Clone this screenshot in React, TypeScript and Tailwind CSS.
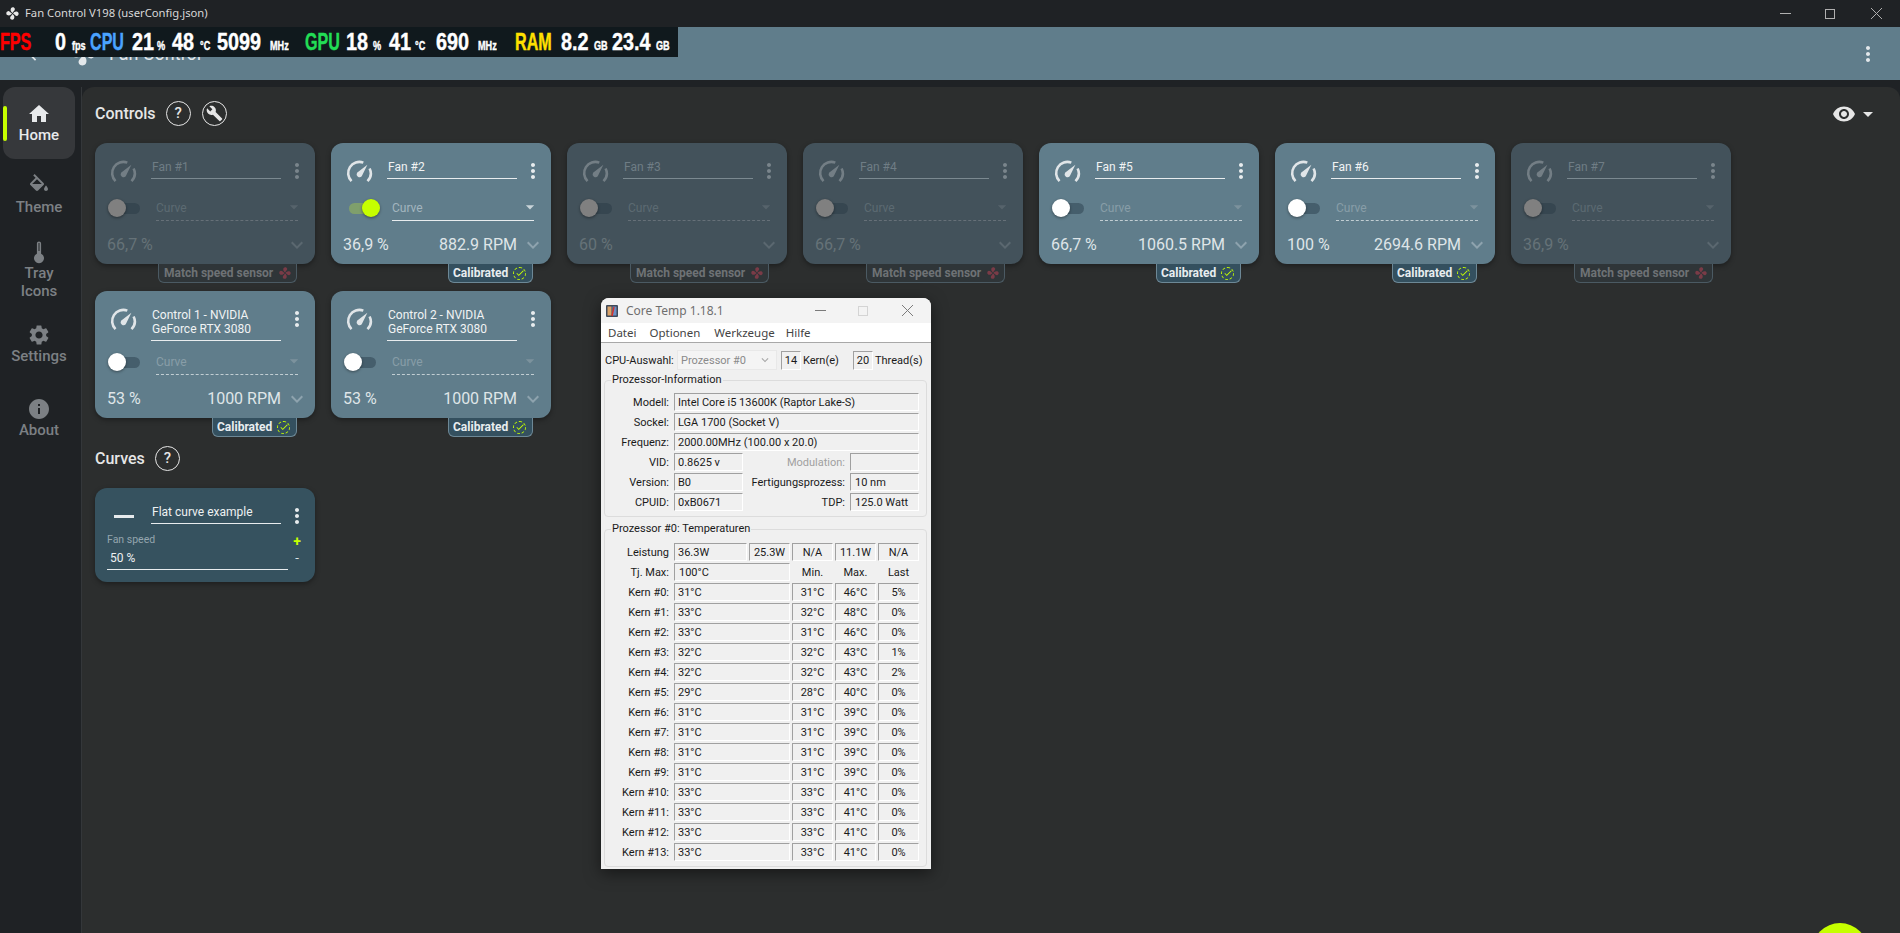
import clsx from 'clsx';
import {
  MdArrowBack,
  MdArrowDropDown,
  MdBuild,
  MdCheck,
  MdExpandMore,
  MdHome,
  MdInfo,
  MdMoreVert,
  MdSettings,
  MdVisibility,
} from 'react-icons/md';

type Fan = {
  name: string;
  enabled: boolean;
  percent: string;
  rpm?: string;
  toggle?: 'on' | 'off';
  badge: 'calibrated' | 'match';
};

const controls: Fan[] = [
  { name: 'Fan #1', enabled: false, percent: '66,7 %', badge: 'match' },
  { name: 'Fan #2', enabled: true, percent: '36,9 %', rpm: '882.9 RPM', toggle: 'on', badge: 'calibrated' },
  { name: 'Fan #3', enabled: false, percent: '60 %', badge: 'match' },
  { name: 'Fan #4', enabled: false, percent: '66,7 %', badge: 'match' },
  { name: 'Fan #5', enabled: true, percent: '66,7 %', rpm: '1060.5 RPM', toggle: 'off', badge: 'calibrated' },
  { name: 'Fan #6', enabled: true, percent: '100 %', rpm: '2694.6 RPM', toggle: 'off', badge: 'calibrated' },
  { name: 'Fan #7', enabled: false, percent: '36,9 %', badge: 'match' },
  { name: 'Control 1 - NVIDIA GeForce RTX 3080', enabled: true, percent: '53 %', rpm: '1000 RPM', toggle: 'off', badge: 'calibrated' },
  { name: 'Control 2 - NVIDIA GeForce RTX 3080', enabled: true, percent: '53 %', rpm: '1000 RPM', toggle: 'off', badge: 'calibrated' },
];

const cores = [
  ['Kern #0:', '31°C', '31°C', '46°C', '5%'],
  ['Kern #1:', '33°C', '32°C', '48°C', '0%'],
  ['Kern #2:', '33°C', '31°C', '46°C', '0%'],
  ['Kern #3:', '32°C', '32°C', '43°C', '1%'],
  ['Kern #4:', '32°C', '32°C', '43°C', '2%'],
  ['Kern #5:', '29°C', '28°C', '40°C', '0%'],
  ['Kern #6:', '31°C', '31°C', '39°C', '0%'],
  ['Kern #7:', '31°C', '31°C', '39°C', '0%'],
  ['Kern #8:', '31°C', '31°C', '39°C', '0%'],
  ['Kern #9:', '31°C', '31°C', '39°C', '0%'],
  ['Kern #10:', '33°C', '33°C', '41°C', '0%'],
  ['Kern #11:', '33°C', '33°C', '41°C', '0%'],
  ['Kern #12:', '33°C', '33°C', '41°C', '0%'],
  ['Kern #13:', '33°C', '33°C', '41°C', '0%'],
];

function FanIcon({ className }: { className?: string }) {
  const blade = 'M12 11.2C9.6 9.6 8 6.6 9.6 3.6 11.4 1.2 15.4 2 15.8 4.8 16 7.4 13.4 8.4 12 11.2Z';
  return (
    <svg viewBox="0 0 24 24" className={className} fill="currentColor">
      <path d={blade} />
      <path d={blade} transform="rotate(90 12 12)" />
      <path d={blade} transform="rotate(180 12 12)" />
      <path d={blade} transform="rotate(270 12 12)" />
    </svg>
  );
}

function GaugeIcon({ className }: { className?: string }) {
  return (
    <svg viewBox="0 0 24 24" className={className} fill="none" stroke="currentColor">
      <path d="M4.9 20.6A10 10 0 0 1 15.4 4.1" strokeWidth="2.3" />
      <path d="M21 9.3A10 10 0 0 1 19.1 20.6" strokeWidth="2.3" />
      <path d="M19 6L14 16.2A2.6 2.6 0 0 1 9.8 13.2Z" fill="currentColor" stroke="none" />
    </svg>
  );
}

function ThermometerIcon({ className }: { className?: string }) {
  return (
    <svg viewBox="0 0 24 24" className={className} fill="currentColor">
      <path d="M12 1.5c-1.2 0-2.1.9-2.1 2.1v10.1a5 5 0 1 0 4.2 0V3.6c0-1.2-.9-2.1-2.1-2.1Z" />
      <rect x="11.5" y="3" width="1" height="8" fill="#1f2225" />
    </svg>
  );
}

function BucketIcon({ className }: { className?: string }) {
  return (
    <svg viewBox="0 0 24 24" className={className} fill="currentColor">
      <path d="M16.56 8.94 7.62 0 6.21 1.41l2.38 2.38-5.15 5.15c-.59.59-.59 1.54 0 2.12l5.5 5.5c.29.29.68.44 1.06.44s.77-.15 1.06-.44l5.5-5.5c.59-.58.59-1.53 0-2.12ZM5.21 10 10 5.21 14.79 10H5.21ZM19 11.5s-2 2.17-2 3.5c0 1.1.9 2 2 2s2-.9 2-2c0-1.33-2-3.5-2-3.5Z" />
    </svg>
  );
}

function HelpCircle() {
  return (
    <span className="flex h-[25px] w-[25px] items-center justify-center rounded-full border-[1.5px] border-[#e6e6e6] text-[15px] font-medium text-[#e6e6e6]">
      ?
    </span>
  );
}

function SideItem({ icon, label, className }: { icon: React.ReactNode; label: React.ReactNode; className?: string }) {
  return (
    <div className={clsx('flex w-[72px] flex-col items-center text-center text-[15px] font-medium leading-[18px] text-[#7c8084]', className)}>
      {icon}
      {label}
    </div>
  );
}

function Sidebar() {
  return (
    <aside className="flex w-[82px] shrink-0 flex-col border-r border-[#34373a] bg-[#1f2225] pl-[3px]">
      <div className="relative flex h-[72px] w-[72px] flex-col items-center rounded-xl bg-[#36383b] pt-[15px] text-center text-[15px] font-medium leading-[18px] text-[#e8eaec]">
        <span className="absolute left-0 top-[19px] h-[35px] w-[4px] rounded-full bg-[#c6ff00]" />
        <MdHome size={24} />
        Home
      </div>
      <SideItem className="h-[72px] pt-[15px]" icon={<BucketIcon className="h-6 w-6" />} label="Theme" />
      <SideItem className="pt-[9px]" icon={<ThermometerIcon className="h-6 w-6" />} label={<>Tray<br />Icons</>} />
      <SideItem className="pt-[23px]" icon={<MdSettings size={24} />} label="Settings" />
      <SideItem className="pt-[32px]" icon={<MdInfo size={24} />} label="About" />
    </aside>
  );
}

function FanCard({ fan }: { fan: Fan }) {
  const on = fan.enabled;
  return (
    <div className="w-[220px]">
      <div
        className={clsx(
          'rounded-xl pb-0 shadow-[0_2px_5px_rgba(0,0,0,0.35)]',
          on ? 'bg-[#607d8b] text-[#e3e8eb]' : 'bg-[#43525b] text-[#6c7981]',
        )}
      >
        <div className="flex min-h-[44px] items-start pt-[17px]">
          <div className="flex w-[56px] justify-center pl-[1px]">
            <GaugeIcon className={clsx('h-[27px] w-[27px] -translate-y-[2px]', on ? 'text-[#e0e5e8]' : 'text-[#737e85]')} />
          </div>
          <div
            className={clsx(
              'w-[130px] border-b pb-[4px] pl-[1px] text-[12px] leading-[14px]',
              on ? 'border-[#e8ecee] text-[#f1f3f4]' : 'border-[#7b8990] text-[#6f7d85]',
            )}
          >
            {fan.name}
          </div>
          <MdMoreVert size={24} className={clsx('ml-[4px] -translate-y-[1px]', on ? 'text-[#e8ecee]' : 'text-[#7a858c]')} />
        </div>
        <div className="flex h-[34px]">
          <div className="relative mt-[11px] h-[20px] w-[61px]">
            {fan.toggle === 'on' ? (
              <>
                <span className="absolute left-[18px] top-[5px] h-[11px] w-[28px] rounded-full bg-[#7f9f6c]" />
                <span className="absolute left-[31px] top-[1px] h-[18px] w-[18px] rounded-full bg-[#c6ff00] shadow-[0_1px_3px_rgba(0,0,0,0.4)]" />
              </>
            ) : (
              <>
                <span className={clsx('absolute left-[15px] top-[5px] h-[11px] w-[30px] rounded-full', on ? 'bg-[#455e6c]' : 'bg-[#364650]')} />
                <span className={clsx('absolute left-[13px] top-[1px] h-[18px] w-[18px] rounded-full shadow-[0_1px_3px_rgba(0,0,0,0.4)]', on ? 'bg-white' : 'bg-[#808080]')} />
              </>
            )}
          </div>
          <div
            className={clsx(
              'flex h-[34px] w-[142px] items-center justify-between border-b pt-[8px] text-[12px]',
              fan.toggle === 'on' && 'border-solid border-[#e8ecee] text-[#a3b5bf]',
              fan.toggle === 'off' && 'border-dashed border-[#c2ced3] text-[#889da8]',
              !fan.toggle && 'border-dashed border-[#667078] text-[#5c6a72]',
            )}
          >
            Curve
            <MdArrowDropDown size={20} className={clsx('-mr-[6px] -translate-y-[1px]', fan.toggle === 'on' ? 'text-[#c9d4d9]' : fan.toggle === 'off' ? 'text-[#7c929d]' : 'text-[#56636b]')} />
          </div>
        </div>
        <div className="flex h-[43px] items-center pl-[12px] pt-[5px] text-[16px]">
          <span className={on ? 'text-[#dfe5e8]' : 'text-[#667278]'}>{fan.percent}</span>
          <span className={clsx('ml-auto', on ? 'text-[#dfe5e8]' : 'text-[#667278]')}>{fan.rpm}</span>
          <MdExpandMore size={24} className={clsx('ml-[4px] mr-[6px]', on ? 'text-[#8ea3ae]' : 'text-[#5b6870]')} />
        </div>
      </div>
      <div className="flex h-[19px] justify-end pr-[18px]">
        {fan.badge === 'calibrated' ? (
          <div className="flex w-[85px] items-center rounded-b-md border border-t-0 border-[#6d8896] bg-[#34505f] pl-[4px] text-[12px] font-bold leading-none text-[#e8edef]">
            Calibrated
            <span className="relative ml-[5px] flex h-[13px] w-[13px] items-center justify-center rounded-full border border-dashed border-[#c6ff00] text-[#c6ff00]">
              <MdCheck size={10} />
            </span>
          </div>
        ) : (
          <div className="flex w-[139px] items-center rounded-b-md border border-t-0 border-[#4b5a63] bg-[#2f3538] pl-[5px] text-[12px] font-bold leading-none text-[#6e7275]">
            Match speed sensor
            <FanIcon className="ml-[5px] h-[14px] w-[14px] text-[#7a3b47]" />
          </div>
        )}
      </div>
    </div>
  );
}

function CurveCard() {
  return (
    <div className="h-[94px] w-[220px] rounded-xl bg-[#36525f] pt-[17px] shadow-[0_2px_5px_rgba(0,0,0,0.35)]">
      <div className="flex items-start">
        <div className="flex h-[22px] w-[56px] items-center justify-center pl-[1px] pt-[1px]">
          <span className="h-[3px] w-[20px] bg-[#e6eaec]" />
        </div>
        <div className="w-[130px] border-b border-[#e8ecee] pb-[4px] pl-[1px] text-[12px] leading-[14px] text-[#eef1f2]">
          Flat curve example
        </div>
        <MdMoreVert size={24} className="ml-[4px] -translate-y-[1px] text-[#e8ecee]" />
      </div>
      <div className="flex pl-[12px] pt-[5px]">
        <div className="w-[181px]">
          <div className="text-[10.5px] leading-[12px] text-[#94a5ae]">Fan speed</div>
          <div className="mt-[5px] border-b border-[#e8ecee] pb-[4px] pl-[3px] text-[12px] leading-[14px] text-[#eef1f2]">50 %</div>
        </div>
        <div className="ml-[2px] flex w-[14px] flex-col items-center leading-[14px]">
          <span className="text-[14px] font-bold text-[#c6ff00]">+</span>
          <span className="mt-[3px] text-[13px] text-[#dfe5e8]">-</span>
        </div>
      </div>
    </div>
  );
}

function Field({ children, className }: { children?: React.ReactNode; className?: string }) {
  return (
    <div className={clsx('flex h-[18px] items-center whitespace-nowrap border border-b-white border-l-[#a0a0a0] border-r-white border-t-[#a0a0a0]', className)}>
      {children}
    </div>
  );
}

function Label({ children, className }: { children: React.ReactNode; className?: string }) {
  return <div className={clsx('flex h-[18px] items-center justify-end whitespace-nowrap pr-[5px]', className)}>{children}</div>;
}

function CoreTempWindow() {
  return (
    <div className="absolute left-[601px] top-[298px] h-[571px] w-[330px] overflow-hidden rounded-t-lg bg-[#f0f0f0] font-['Roboto',sans-serif] text-[11px] leading-none text-[#1a1a1a] shadow-[0_4px_16px_rgba(0,0,0,0.5)]">
      <div className="flex h-[25px] items-center bg-[#f3f3f3] pl-[5px] font-['Noto_Sans',sans-serif] text-[#6f6f6f]">
        <svg viewBox="0 0 12 12" className="h-3 w-3">
          <rect width="12" height="12" rx="1" fill="#3f4a5a" />
          <rect x="1.5" y="1.5" width="4" height="9" fill="#d9a36a" />
          <rect x="6.5" y="1.5" width="4" height="9" fill="#6d8fc4" />
          <path d="M6 11 8 2" stroke="#d8302a" strokeWidth="1.4" />
        </svg>
        <span className="ml-[8px] text-[12px]">Core Temp 1.18.1</span>
        <span className="ml-[91px] h-px w-[11px] bg-[#7a7a7a]" />
        <span className="ml-[32px] h-[10px] w-[10px] border border-[#d4d4d4]" />
        <span className="ml-[34px] text-[#7a7a7a]">
          <svg viewBox="0 0 10 10" className="h-[11px] w-[11px]" stroke="currentColor" strokeWidth="0.9">
            <path d="M0 0 10 10M10 0 0 10" />
          </svg>
        </span>
      </div>
      <div className="flex h-[20px] items-center border-b border-[#a8a8a8] bg-white pl-[7px] font-['Noto_Sans',sans-serif] text-[11.5px] text-[#444]">
        <span>Datei</span>
        <span className="ml-[13px]">Optionen</span>
        <span className="ml-[14px]">Werkzeuge</span>
        <span className="ml-[11px]">Hilfe</span>
      </div>
      <div className="mt-[7px] flex h-[20px] items-center whitespace-nowrap pl-[4px]">
        <span className="w-[72px]">CPU-Auswahl:</span>
        <div className="flex h-[20px] w-[100px] items-center justify-between border border-[#e8e8e8] bg-[#f4f4f4] pl-[3px] pr-[4px] text-[#8a8a8a]">
          Prozessor #0
          <MdExpandMore size={14} className="text-[#a8a8a8]" />
        </div>
        <Field className="ml-[4px] h-[19px] w-[20px] justify-center">14</Field>
        <span className="ml-[2px] w-[50px]">Kern(e)</span>
        <Field className="h-[19px] w-[20px] justify-center">20</Field>
        <span className="ml-[2px]">Thread(s)</span>
      </div>
      <fieldset className="mx-[3px] mt-[2px] w-[323px] rounded-sm border border-[#dcdcdc] pb-[5px] pt-[5px]">
        <legend className="ml-[6px] px-[1px] leading-[16px]">Prozessor-Information</legend>
        <div className="grid grid-cols-[69px_69px_107px_69px] gap-y-[2px]">
          <Label>Modell:</Label>
          <Field className="col-span-3 pl-[3px]">Intel Core i5 13600K (Raptor Lake-S)</Field>
          <Label>Sockel:</Label>
          <Field className="col-span-3 pl-[3px]">LGA 1700 (Socket V)</Field>
          <Label>Frequenz:</Label>
          <Field className="col-span-3 pl-[3px]">2000.00MHz (100.00 x 20.0)</Field>
          <Label>VID:</Label>
          <Field className="pl-[3px]">0.8625 v</Field>
          <Label className="text-[#a0a0a0]">Modulation:</Label>
          <Field />
          <Label>Version:</Label>
          <Field className="pl-[3px]">B0</Field>
          <Label>Fertigungsprozess:</Label>
          <Field className="pl-[4px]">10 nm</Field>
          <Label>CPUID:</Label>
          <Field className="pl-[3px]">0xB0671</Field>
          <Label>TDP:</Label>
          <Field className="pl-[4px]">125.0 Watt</Field>
        </div>
      </fieldset>
      <fieldset className="mx-[3px] mt-[4px] w-[323px] rounded-sm border border-[#dcdcdc] pb-[5px] pt-[6px]">
        <legend className="ml-[6px] px-[1px] leading-[16px]">Prozessor #0: Temperaturen</legend>
        <div className="grid grid-cols-[69px_73px_41px_41px_41px_41px] gap-y-[2px]">
          <Label>Leistung</Label>
          <Field className="pl-[3px]">36.3W</Field>
          <Field className="ml-[2px] w-[41px] justify-center">25.3W</Field>
          <Field className="ml-[4px] w-[41px] justify-center">N/A</Field>
          <Field className="ml-[6px] w-[41px] justify-center">11.1W</Field>
          <Field className="ml-[8px] w-[41px] justify-center">N/A</Field>
          <Label>Tj. Max:</Label>
          <Field className="col-span-2 w-[116px] pl-[4px]">100°C</Field>
          <div className="ml-[4px] flex h-[18px] w-[41px] items-center justify-center">Min.</div>
          <div className="ml-[6px] flex h-[18px] w-[41px] items-center justify-center">Max.</div>
          <div className="ml-[8px] flex h-[18px] w-[41px] items-center justify-center">Last</div>
          {cores.map(([label, now, min, max, load]) => (
            <div key={label} className="contents">
              <Label>{label}</Label>
              <Field className="col-span-2 w-[116px] pl-[3px]">{now}</Field>
              <Field className="ml-[4px] w-[41px] justify-center">{min}</Field>
              <Field className="ml-[6px] w-[41px] justify-center">{max}</Field>
              <Field className="ml-[8px] w-[41px] justify-center">{load}</Field>
            </div>
          ))}
        </div>
      </fieldset>
    </div>
  );
}

function Overlay() {
  const text = 'inline-block origin-left';
  const label = clsx(text, 'scale-x-[0.7] text-[23px]');
  const num = clsx(text, 'scale-x-[0.86] text-[23px] text-white');
  const unit = clsx(text, 'scale-x-[0.76] text-[12px] text-white');
  return (
    <div className="absolute left-0 top-[27px] flex h-[30px] w-[678px] items-baseline overflow-hidden whitespace-nowrap bg-[#10191d] pt-[1px] font-['Liberation_Sans',sans-serif] font-bold leading-[28px] [-webkit-text-stroke:0.4px_currentColor]">
      <span className="w-[55px]"><span className={clsx(label, 'text-[#ff0000]')}>FPS</span></span>
      <span className="w-[17px]"><span className={num}>0</span></span>
      <span className="w-[18px]"><span className={unit}>fps</span></span>
      <span className="w-[42px]"><span className={clsx(label, 'text-[#4aa3ff]')}>CPU</span></span>
      <span className="w-[25px]"><span className={num}>21</span></span>
      <span className="w-[15px]"><span className={unit}>%</span></span>
      <span className="w-[28px]"><span className={num}>48</span></span>
      <span className="w-[17px]"><span className={unit}>°C</span></span>
      <span className="w-[53px]"><span className={num}>5099</span></span>
      <span className="w-[35px]"><span className={unit}>MHz</span></span>
      <span className="w-[41px]"><span className={clsx(label, 'text-[#22dd55]')}>GPU</span></span>
      <span className="w-[27px]"><span className={num}>18</span></span>
      <span className="w-[16px]"><span className={unit}>%</span></span>
      <span className="w-[26px]"><span className={num}>41</span></span>
      <span className="w-[21px]"><span className={unit}>°C</span></span>
      <span className="w-[42px]"><span className={num}>690</span></span>
      <span className="w-[37px]"><span className={unit}>MHz</span></span>
      <span className="w-[46px]"><span className={clsx(label, 'text-[#ffe000]')}>RAM</span></span>
      <span className="w-[33px]"><span className={num}>8.2</span></span>
      <span className="w-[18px]"><span className={unit}>GB</span></span>
      <span className="w-[44px]"><span className={num}>23.4</span></span>
      <span><span className={unit}>GB</span></span>
    </div>
  );
}

export default function App() {
  return (
    <div className="relative flex h-[933px] w-[1900px] flex-col overflow-hidden bg-[#1f2225] font-['Roboto',sans-serif]">
      <div className="flex h-[27px] shrink-0 items-center pl-[5px] font-['Noto_Sans',sans-serif] text-[11.25px] text-[#d8d8d8]">
        <FanIcon className="h-[15px] w-[15px] text-[#e8e8e8]" />
        <span className="ml-[5px]">Fan Control V198 (userConfig.json)</span>
        <span className="ml-auto h-px w-[11px] bg-[#b0b0b0]" />
        <span className="ml-[34px] h-[10px] w-[10px] border border-[#b0b0b0]" />
        <svg viewBox="0 0 10 10" className="ml-[36px] mr-[18px] h-[11px] w-[11px] text-[#b0b0b0]" stroke="currentColor" strokeWidth="0.9">
          <path d="M0 0 10 10M10 0 0 10" />
        </svg>
      </div>
      <header className="flex h-[53px] shrink-0 items-center bg-[#607d8b] pl-[25px] pr-[20px] text-[#e3e8eb]">
        <MdArrowBack size={20} />
        <FanIcon className="ml-[24px] h-[28px] w-[28px]" />
        <span className="ml-[12px] text-[18px]">Fan Control</span>
        <MdMoreVert size={24} className="ml-auto" />
      </header>
      <div className="mt-[7px] flex min-h-0 flex-1">
        <Sidebar />
        <main className="min-w-0 flex-1 rounded-t-xl bg-[#2c2e2e] pl-[13px]">
          <div className="mb-[2px] flex h-[54px] items-center pb-[1px] pr-[20px]">
            <span className="text-[16px] font-medium text-[#e6e6e6]">Controls</span>
            <span className="ml-[10px]"><HelpCircle /></span>
            <span className="ml-[11px] flex h-[25px] w-[25px] items-center justify-center rounded-full border-[1.5px] border-[#e6e6e6] text-[#e6e6e6]">
              <MdBuild size={17} />
            </span>
            <MdVisibility size={24} className="ml-auto text-[#e6e6e6]" />
            <MdArrowDropDown size={24} className="text-[#e6e6e6]" />
          </div>
          <div className="flex flex-wrap gap-x-[16px] gap-y-[8px]">
            {controls.map((fan) => (
              <FanCard key={fan.name} fan={fan} />
            ))}
          </div>
          <div className="mt-[9px] flex h-[25px] items-center">
            <span className="text-[16px] font-medium text-[#e6e6e6]">Curves</span>
            <span className="ml-[10px]"><HelpCircle /></span>
          </div>
          <div className="mt-[17px]">
            <CurveCard />
          </div>
        </main>
      </div>
      <Overlay />
      <CoreTempWindow />
      <div className="absolute left-[1812px] top-[923px] h-[56px] w-[56px] rounded-full bg-[#c6ff00]" />
    </div>
  );
}
